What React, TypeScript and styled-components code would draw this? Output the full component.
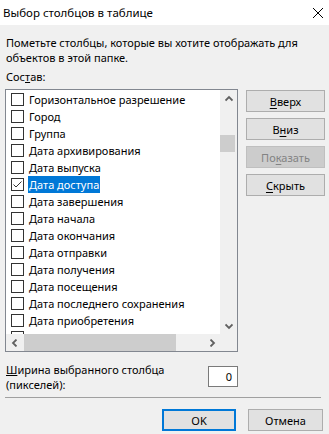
import React from "react";
import styled, { createGlobalStyle } from "styled-components";

const GlobalStyle = createGlobalStyle`
  html, body {
    margin: 0;
    padding: 0;
    background: #f0f0f0;
  }
  body {
    font-family: "Noto Sans", "Segoe UI", sans-serif;
    font-size: 11px;
    color: #000;
  }
`;

const Window = styled.div`
  width: 329px;
  height: 434px;
  background: #f0f0f0;
  display: flex;
  flex-direction: column;
  overflow: hidden;
`;

const TitleBar = styled.div`
  height: 25px;
  flex-shrink: 0;
  background: #fff;
  display: flex;
  align-items: center;
  justify-content: space-between;
  padding: 0 6px 0 3px;
`;

const TitleText = styled.span`
  font-size: 11.5px;
  line-height: 15px;
`;

const Content = styled.div`
  padding: 10px 4px 0 5px;
  display: flex;
  flex-direction: column;
`;

const Para = styled.p`
  margin: 0 0 0 1px;
  line-height: 15px;
`;

const Label = styled.div`
  margin: 4px 0 0 1px;
  line-height: 15px;
`;

const MainRow = styled.div`
  margin-top: 5px;
  display: flex;
  gap: 8px;
`;

const ListBox = styled.div`
  width: 233px;
  height: 263px;
  box-sizing: border-box;
  border: 1px solid #828790;
  background: #fff;
  display: grid;
  grid-template-columns: 1fr 17px;
  grid-template-rows: 1fr 17px;
`;

const Items = styled.ul`
  list-style: none;
  margin: 0;
  padding: 1px 0 0 0;
  overflow: hidden;
`;

const Row = styled.li`
  height: 17px;
  display: flex;
  align-items: center;
  padding-left: 5px;
  white-space: nowrap;
`;

const Check = styled.span`
  width: 13px;
  height: 13px;
  flex-shrink: 0;
  box-sizing: border-box;
  border: 1px solid #333;
  background: #fff;
  display: flex;
  align-items: center;
  justify-content: center;
`;

const ItemText = styled.span<{ selected?: boolean }>`
  margin-left: 4px;
  height: 17px;
  line-height: 17px;
  padding: 0 1px;
  background: ${({ selected }) => (selected ? "#0078d7" : "transparent")};
  color: ${({ selected }) => (selected ? "#fff" : "#000")};
`;

const VScroll = styled.div`
  background: #f0f0f0;
  display: flex;
  flex-direction: column;
`;

const HScroll = styled.div`
  background: #f0f0f0;
  display: flex;
`;

const Corner = styled.div`
  background: #f0f0f0;
`;

const Arrow = styled.div`
  width: 17px;
  height: 17px;
  flex-shrink: 0;
  display: flex;
  align-items: center;
  justify-content: center;
`;

const Track = styled.div<{ vertical?: boolean }>`
  flex: 1;
  display: flex;
  flex-direction: ${({ vertical }) => (vertical ? "column" : "row")};
`;

const Thumb = styled.div<{ offset: number; size: number; vertical?: boolean }>`
  background: #cdcdcd;
  ${({ vertical, offset, size }) =>
    vertical
      ? `margin-top: ${offset}px; height: ${size}px; width: 15px;`
      : `margin-left: ${offset}px; width: ${size}px; height: 17px;`}
`;

const ButtonColumn = styled.div`
  display: flex;
  flex-direction: column;
  gap: 6px;
  padding-top: 1px;
`;

const Button = styled.button<{ width?: number; primary?: boolean }>`
  width: ${({ width }) => width ?? 79}px;
  height: 22px;
  box-sizing: border-box;
  margin: 0;
  padding: 0;
  font: inherit;
  color: #000;
  background: #e1e1e1;
  border: 1px solid #adadad;
  ${({ primary }) => primary && "border: 2px solid #0078d7;"}

  &:disabled {
    background: #cccccc;
    border-color: #bfbfbf;
    color: #838383;
  }

  u {
    text-decoration-thickness: 1px;
    text-underline-offset: 2px;
  }
`;

const WidthRow = styled.div`
  margin-top: 10px;
  width: 233px;
  display: flex;
  justify-content: space-between;
  align-items: flex-start;
`;

const WidthLabel = styled.div`
  margin-left: 1px;
  line-height: 15px;
  white-space: nowrap;
`;

const NumberBox = styled.div`
  margin-top: 4px;
  width: 30px;
  height: 21px;
  box-sizing: border-box;
  border: 1px solid #7a7a7a;
  background: #fff;
  text-align: right;
  line-height: 19px;
  padding-right: 5px;
`;

const Separator = styled.hr`
  margin: 5px 4px 0 0;
  border: 0;
  border-top: 1px solid #a0a0a0;
`;

const Footer = styled.div`
  margin-top: 11px;
  display: flex;
  justify-content: flex-end;
  gap: 12px;
  padding-right: 2px;
`;

const Chevron = ({ dir }: { dir: "up" | "down" | "left" | "right" }) => {
  const rot = { up: 0, right: 90, down: 180, left: 270 }[dir];
  return (
    <svg width="8" height="8" viewBox="0 0 8 8" style={{ transform: `rotate(${rot}deg)` }}>
      <path d="M0.5 5.5 L4 2 L7.5 5.5" fill="none" stroke="#606060" strokeWidth="1.8" />
    </svg>
  );
};

const items = [
  "Горизонтальное разрешение",
  "Город",
  "Группа",
  "Дата архивирования",
  "Дата выпуска",
  "Дата доступа",
  "Дата завершения",
  "Дата начала",
  "Дата окончания",
  "Дата отправки",
  "Дата получения",
  "Дата посещения",
  "Дата последнего сохранения",
  "Дата приобретения",
];

const checked = "Дата доступа";

const App: React.FC = () => {
  return (
    <Window>
      <GlobalStyle />
      <TitleBar>
        <TitleText>Выбор столбцов в таблице</TitleText>
        <svg width="10" height="10" viewBox="0 0 10 10">
          <path d="M0 0 L10 10 M10 0 L0 10" stroke="#000" strokeWidth="1" />
        </svg>
      </TitleBar>
      <Content>
        <Para>
          Пометьте столбцы, которые вы хотите отображать для
          <br />
          объектов в этой папке.
        </Para>
        <Label>
          Сос<u>т</u>ав:
        </Label>
        <MainRow>
          <ListBox>
            <Items>
              {items.map((name) => (
                <Row key={name}>
                  <Check>
                    {name === checked && (
                      <svg width="11" height="11" viewBox="0 0 11 11">
                        <path d="M1.5 5.5 L4 8 L9.5 2.5" fill="none" stroke="#333" strokeWidth="1" />
                      </svg>
                    )}
                  </Check>
                  <ItemText selected={name === checked}>{name}</ItemText>
                </Row>
              ))}
              {/* next row is scrolled mostly out of view, only the box edge shows */}
              <Row>
                <Check />
              </Row>
            </Items>
            <VScroll>
              <Arrow>
                <Chevron dir="up" />
              </Arrow>
              <Track vertical>
                <Thumb vertical offset={28} size={17} />
              </Track>
              <Arrow>
                <Chevron dir="down" />
              </Arrow>
            </VScroll>
            <HScroll>
              <Arrow>
                <Chevron dir="left" />
              </Arrow>
              <Track>
                <Thumb offset={1} size={152} />
              </Track>
              <Arrow>
                <Chevron dir="right" />
              </Arrow>
            </HScroll>
            <Corner />
          </ListBox>
          <ButtonColumn>
            <Button>
              <u>В</u>верх
            </Button>
            <Button>
              В<u>н</u>из
            </Button>
            <Button disabled>
              По<u>к</u>азать
            </Button>
            <Button>
              <u>С</u>крыть
            </Button>
          </ButtonColumn>
        </MainRow>
        <WidthRow>
          <WidthLabel>
            <u>Ш</u>ирина выбранного столбца
            <br />
            (пикселей):
          </WidthLabel>
          <NumberBox>0</NumberBox>
        </WidthRow>
        <Separator />
        <Footer>
          <Button primary width={74}>
            OK
          </Button>
          <Button width={75}>Отмена</Button>
        </Footer>
      </Content>
    </Window>
  );
};

export default App;
